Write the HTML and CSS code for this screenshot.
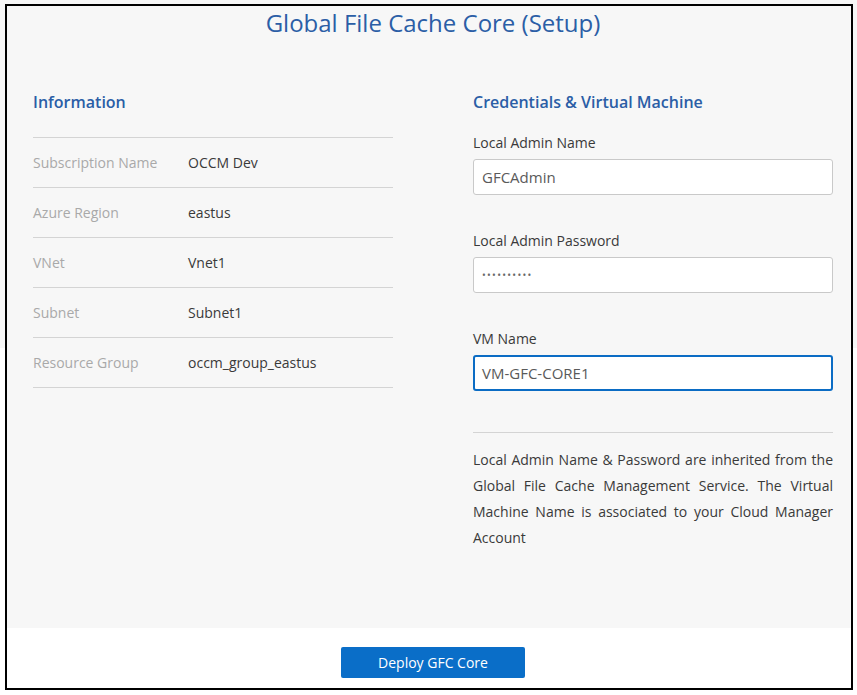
FILE: index.html
```html
<!DOCTYPE html>
<html>
<head>
<meta charset="utf-8">
<link rel="stylesheet" href="styles.css">
</head>
<body>
<div class="frame">
  <div class="main">
    <h1 class="title">Global File Cache Core (Setup)</h1>
    <div class="columns">
      <section class="col">
        <h2 class="heading">Information</h2>
        <div class="table">
          <div class="row"><span class="key">Subscription Name</span><span class="val">OCCM Dev</span></div>
          <div class="row"><span class="key">Azure Region</span><span class="val">eastus</span></div>
          <div class="row"><span class="key">VNet</span><span class="val">Vnet1</span></div>
          <div class="row"><span class="key">Subnet</span><span class="val">Subnet1</span></div>
          <div class="row"><span class="key">Resource Group</span><span class="val">occm_group_eastus</span></div>
        </div>
      </section>
      <section class="col">
        <h2 class="heading">Credentials &amp; Virtual Machine</h2>
        <div class="field">
          <label class="label">Local Admin Name</label>
          <div class="input">GFCAdmin</div>
        </div>
        <div class="field">
          <label class="label">Local Admin Password</label>
          <div class="input dots">••••••••••</div>
        </div>
        <div class="field">
          <label class="label">VM Name</label>
          <div class="input focus">VM-GFC-CORE1</div>
        </div>
        <p class="note">Local Admin Name &amp; Password are inherited from the Global File Cache Management Service. The Virtual Machine Name is associated to your Cloud Manager Account</p>
      </section>
    </div>
  </div>
  <div class="footer">
    <button class="btn">Deploy GFC Core</button>
  </div>
</div>
</body>
</html>
```

FILE: styles.css
```css
html, body {
  margin: 0;
  padding: 0;
}
body {
  background: linear-gradient(#f7f7f7 50%, #ffffff 50%);
  font-family: "Open Sans", "Noto Sans", sans-serif;
  color: #333;
  height: 695px;
  overflow: hidden;
}
.frame {
  box-sizing: border-box;
  margin: 4px 0 0 5px;
  width: 848px;
  height: 686px;
  border: 2px solid #000;
  background: #fff;
  display: flex;
  flex-direction: column;
}
.main {
  background: #f7f7f7;
  height: 622px;
  padding: 1px 18px 0 26px;
  box-sizing: border-box;
}
.title {
  margin: 0;
  text-align: center;
  font-size: 24px;
  line-height: 32px;
  font-weight: 400;
  color: #2b5ea6;
}
.columns {
  display: flex;
  gap: 80px;
  margin-top: 52px;
}
.col {
  width: 360px;
}
.heading {
  margin: 0;
  font-size: 16px;
  line-height: 22px;
  font-weight: 600;
  color: #2b5ea6;
}
.table {
  margin-top: 24px;
  border-top: 1px solid #d4d4d4;
}
.row {
  display: flex;
  align-items: center;
  height: 49px;
  border-bottom: 1px solid #d4d4d4;
  font-size: 14px;
}
.key {
  width: 155px;
  color: #a9a9a9;
}
.val {
  color: #3a3a3a;
}
.field {
  margin-top: 20px;
}
.field + .field {
  margin-top: 36px;
}
.label {
  display: block;
  font-size: 14px;
  line-height: 20px;
  color: #3a3a3a;
}
.input {
  margin-top: 6px;
  box-sizing: border-box;
  height: 36px;
  border: 1px solid #c9c9c9;
  border-radius: 3px;
  background: #fff;
  padding: 0 8px;
  display: flex;
  align-items: center;
  font-size: 15px;
  color: #5a5a5a;
}
.input.dots {
  font-size: 10px;
  letter-spacing: 1.3px;
  color: #666;
}
.input.focus {
  border: 2px solid #0b6cc4;
  padding: 0 7px;
}
.note {
  margin: 41px 0 0;
  padding-top: 14px;
  border-top: 1px solid #d4d4d4;
  font-size: 14px;
  line-height: 26px;
  text-align: justify;
  color: #3a3a3a;
}
.footer {
  flex: 1;
  display: flex;
  justify-content: center;
  padding: 19px 18px 0 26px;
}
.btn {
  width: 184px;
  height: 31px;
  border: none;
  border-radius: 2px;
  background: #0a6ec8;
  color: #fff;
  font-family: "Open Sans", "Noto Sans", sans-serif;
  font-size: 14px;
  padding: 0;
}
```
